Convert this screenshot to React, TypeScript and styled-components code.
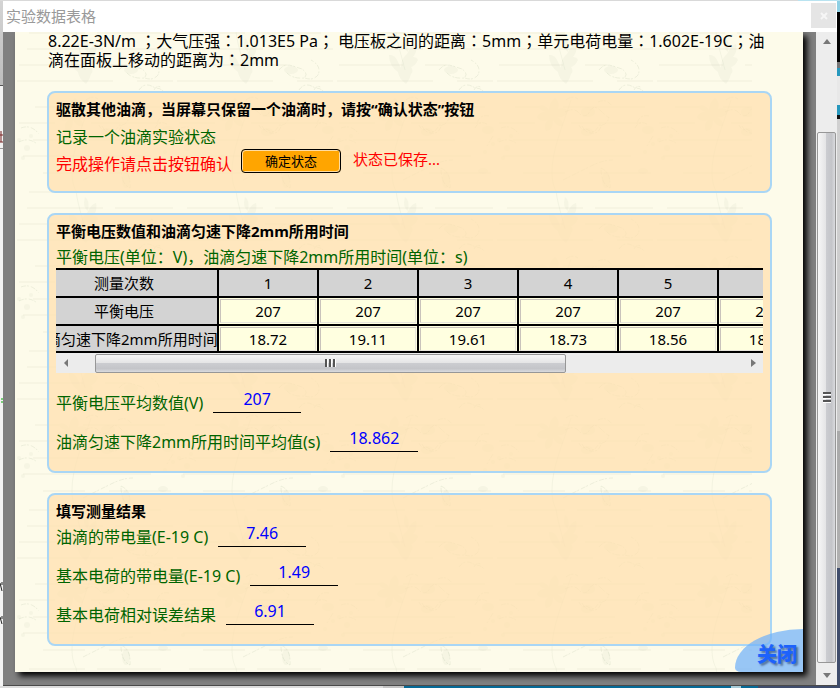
import React from "react";
import styled, { createGlobalStyle } from "styled-components";

const GlobalStyle = createGlobalStyle`
  *, *::before, *::after { box-sizing: border-box; }
  body {
    margin: 0;
    font-family: "Noto Sans", "Noto Sans CJK SC", sans-serif;
    font-size: 16px;
    color: #000;
  }
  button, input { font-family: inherit; }
`;

const Desktop = styled.div`
  display: grid;
  grid-template-columns: 3px minmax(0, 1fr) 3px;
  grid-template-rows: 1px 1fr 3px;
  min-height: 100vh;
  background: #d9d9d9;
`;

const TopEdge = styled.div`
  grid-column: 1 / -1;
  background: linear-gradient(90deg, #d9d9d9 95%, #b9e3f0 95%);
`;

const LeftEdge = styled.div`
  overflow: hidden;
  background: linear-gradient(#d4d4d4, #bdbdbd 84px, #555 84px, #555 85px, #f3f3f3 85px, #f3f3f3 147px, #999 147px, #999 148px, #f3f3f3 148px);
`;

const RightEdge = styled.div`
  overflow: hidden;
  background: linear-gradient(
    #8fd0e4 11px, #000 11px, #000 61px, #777 61px, #777 67px, #2798bd 67px, #2798bd 75px,
    #e8e8e8 75px, #e8e8e8 104px, #2798bd 104px, #2798bd 114px, #111 114px, #111 118px,
    #d0d0d0 118px, #cacaca 430px, #a9a9a9 430px, #b0b0b0 567px, #3f4c6b 567px
  );
`;

const BottomEdge = styled.div`
  grid-column: 1 / -1;
  background: linear-gradient(90deg, #dcdcdc 383px, #c4c4c4 383px, #c4c4c4 404px, #076a96 404px, #076a96 731px, #a8ccd8 731px, #a8ccd8 741px, #076a96 741px, #076a96 758px, #3f4c6b 758px);
`;

const Window = styled.main`
  display: flex;
  flex-direction: column;
  min-width: 0;
  border-bottom: 1px solid #4a4a4a;
`;

const TitleBar = styled.header`
  display: flex;
  align-items: center;
  justify-content: space-between;
  height: 31px;
  padding: 0 1px 2px 3px;
  background: #fff;
`;

const WindowTitle = styled.h1`
  margin: 0;
  font-size: 15px;
  font-weight: 400;
  color: #999;
`;

const CloseWindow = styled.button`
  display: flex;
  align-items: center;
  justify-content: center;
  width: 25px;
  height: 25px;
  padding: 0;
  border: 0;
  background: #e5e5e5;
`;

const Body = styled.div`
  display: flex;
  flex: 1;
`;

const Viewport = styled.div`
  display: flex;
  flex: 1;
  min-width: 0;
  overflow: hidden;
  padding: 0 13px 13px 12px;
  background: #808080;
`;

const Paper = styled.div`
  position: relative;
  isolation: isolate;
  flex: 1;
  min-width: 0;
  padding: 0 31px 26px 32px;
  background: #fdfbea;
  box-shadow: 4px 4px 6px #000;
`;

const PatternLayer = styled.svg`
  position: absolute;
  z-index: -1;
  top: 0;
  left: 0;
  width: calc(100% - 51px);
  height: 100%;
`;

const Intro = styled.p`
  margin: 0 0 21px;
  padding: 0 6px 0 1px;
  font-family: "Noto Sans", "Noto Sans CJK TC", sans-serif;
  font-size: 16px;
  line-height: 19px;
`;

const Sections = styled.div`
  display: flex;
  flex-direction: column;
  gap: 20px;
`;

const Panel = styled.section`
  padding: 3px 7px 15px;
  border: 2px solid #a9d6f5;
  border-radius: 8px;
  background: rgba(255, 224, 175, 0.75);
`;

const PanelTitle = styled.h2`
  margin: 0;
  font-size: 15px;
  font-weight: 700;
  line-height: 26px;
`;

const Line = styled.div<{ $tone: "green" | "red"; $tight?: boolean }>`
  display: flex;
  align-items: center;
  gap: 9px;
  height: ${(p) => (p.$tight ? 24 : 27)}px;
  color: ${(p) => (p.$tone === "green" ? "#006400" : "#f00")};
`;

const ConfirmButton = styled.button`
  width: 100px;
  height: 24px;
  margin-bottom: 3px;
  padding: 0;
  border: 1px solid #000;
  border-radius: 4px;
  background: #ffa500;
  box-shadow: inset 1px 1px 0 #ffdca0, inset -1px -1px 0 #ffdca0;
  font-size: 13px;
  line-height: 20px;
  color: #000;
`;

const Status = styled.span`
  margin: 0 0 8px 3px;
  font-size: 15px;
`;

const TableClip = styled.div`
  overflow: hidden;
`;

const DataTable = styled.table`
  width: 790px;
  margin-left: -27px;
  border-collapse: collapse;
  table-layout: fixed;
  font-size: 15px;

  th, td {
    height: 28px;
    padding: 0;
    border: 2px solid #000;
    text-align: center;
    font-weight: 400;
    line-height: 24px;
    white-space: nowrap;
  }
  th { background: #d3d3d3; }
  td { background: #ffffe0; }
  tr:last-child > * { height: 27px; }
`;

const HeadCol = styled.col`
  width: 188px;
`;

const CellInput = styled.input`
  display: block;
  width: calc(100% - 2px);
  height: 24px;
  margin: 0 auto;
  padding: 0;
  border: 1px solid;
  border-color: #c9c3bb #e8e6dc #e8e6dc #c9c3bb;
  background: #ffffe0;
  font-size: 15px;
  text-align: center;
  color: #000;
`;

const HScroll = styled.div`
  display: flex;
  align-items: center;
  height: 20px;
  background: #ececec;
`;

const ScrollArrow = styled.button`
  display: flex;
  align-items: center;
  justify-content: center;
  flex: none;
  width: 20px;
  height: 20px;
  padding: 0;
  border: 0;
  background: transparent;
`;

const HTrack = styled.div`
  flex: 1;
  padding: 0 25% 0 19px;
`;

const HThumb = styled.div`
  display: flex;
  align-items: center;
  justify-content: center;
  height: 19px;
  border: 1px solid #979797;
  border-radius: 2px;
  background: linear-gradient(#f6f6f6, #e4e4e5 48%, #cbccd0 50%, #c4c5c9 80%, #dadbde);
`;

const VScroll = styled.div`
  display: flex;
  flex-direction: column;
  align-items: center;
  flex: none;
  width: 21px;
  background: #ededed;
`;

const VTrack = styled.div`
  display: flex;
  flex-direction: column;
  flex: 1;
  width: 19px;
  padding: 80px 0 2px;
`;

const VThumb = styled.div`
  display: flex;
  flex: 1;
  align-items: center;
  justify-content: center;
  border: 1px solid #979797;
  border-radius: 2px;
  background: linear-gradient(90deg, #f6f6f6, #e4e4e5 48%, #cbccd0 50%, #c4c5c9 80%, #dadbde);
`;

const Fields = styled.div<{ $spaced?: boolean }>`
  display: flex;
  flex-direction: column;
  gap: 12px;
  padding-top: ${(p) => (p.$spaced ? 17 : 0)}px;
`;

const Field = styled.label`
  display: flex;
  align-items: flex-start;
  gap: 10px;
  height: 27px;
  line-height: 27px;
  color: #006400;
`;

const ValueInput = styled.input`
  width: 88px;
  height: 23px;
  padding: 0 0 4px;
  border: 0;
  border-bottom: 1px solid #000;
  background: transparent;
  font-size: 16px;
  text-align: center;
  color: #00f;
`;

const CloseCorner = styled.button`
  position: absolute;
  right: 0;
  bottom: 0;
  display: flex;
  justify-content: flex-end;
  align-items: center;
  width: 68px;
  height: 43px;
  padding: 6px 6px 0 0;
  border: 0;
  border-radius: 100% 0 0 6px / 90% 0 0 4px;
  background: rgba(112, 178, 250, 0.72);
  font-size: 20px;
  font-weight: 900;
  color: #1d62fb;
  text-shadow: 2px 2px 2px rgba(40, 60, 100, 0.6);
`;

const trials = [
  { voltage: "207", time: "18.72" },
  { voltage: "207", time: "19.11" },
  { voltage: "207", time: "19.61" },
  { voltage: "207", time: "18.73" },
  { voltage: "207", time: "18.56" },
  { voltage: "207", time: "18.44" },
];

const arrows = {
  up: "M5 2 L9 7 H1 Z",
  down: "M1 3 H9 L5 8 Z",
  left: "M3 5 L7 1 V9 Z",
  right: "M3 1 L8 5 L3 9 Z",
};

function Arrow({ dir, label }: { dir: keyof typeof arrows; label: string }) {
  return (
    <ScrollArrow type="button" aria-label={label}>
      <svg width="10" height="10" viewBox="0 0 10 10">
        <path d={arrows[dir]} fill="#777" />
      </svg>
    </ScrollArrow>
  );
}

function BotanicalPattern() {
  return (
    <PatternLayer aria-hidden="true">
      <defs>
        <pattern id="botanical" width="160" height="159" patternUnits="userSpaceOnUse">
          <g fill="none" stroke="#8a9a72" strokeOpacity="0.08" strokeWidth="1.5">
            <path d="M14 1H70M82 1H146M12 17H88M100 17H158M4 33H68M90 33H112M2 49H98M122 49H158M20 75H44M68 75H150M4 91H40M76 91H146M18 108H120M8 124H136M28 141H70M94 141H156" />
          </g>
          <g fill="none" stroke="#7f9a6d" strokeOpacity="0.12" strokeDasharray="5 1 2 2">
            <path d="M76 68C67 96 57 118 57 140C57 150 59 155 61 159M61 0C63 14 66 22 70 38" strokeOpacity="0.08" strokeDasharray="none" />
            <path d="M104 38q5-7 14-4l9 3q7 5 2 9q-12 1-18-6M130 46q8 3 13-3q4-9-7-15M124 58q6-9 16-2q6 0 9 4M139 58q3-6 8-2" />
            <path d="M71 68q6-5 12-1M70 80q9-5 14 1t10 0q4-10 12-2t8 6q-2 9-10 8q-5 11-12 4q-5 3-8-4M87 94q5 10 16 6l4-7M103 70q8-4 14 4" />
            <path d="M152 92q-8-4-12 4M154 84q-10-2-12 8M158 104l-6 10M6 96q10-4 18 6M4 110q10-5 18 2" />
            <path d="M68 148l28-14q12-6 22-6M106 136q10 4 9 20q-9-4-9-20" />
          </g>
          <g fill="#7f9a6d" fillOpacity="0.06">
            <path d="M54 23q6-1 9 7l3 6q0-10 6-14q5-10 9-10q2 7-3 13q4 0 5 3q-3 6-7 7q3 4 0 7q-2 7-5 10q-7-5-8-12q-9-6-9-17" />
            <path d="M70 6q5 3 3 14q-6-4-3-14" />
            <path d="M44 74q6-2 10 4q1-9 6-12q5 4 3 11q7-2 10 2q-3 7-11 6q7 4 6 9q-6 1-10-6q0 11-7 11q-3-6 2-11q-9 2-11-3q2-5 9-5q-7-2-7-6" />
            <ellipse cx="116" cy="38" rx="7" ry="4" />
            <ellipse cx="93" cy="80" rx="7" ry="5" />
            <ellipse cx="92" cy="100" rx="6" ry="4" />
            <ellipse cx="153" cy="98" rx="6" ry="4" />
            <circle cx="158" cy="112" r="2" />
            <circle cx="4" cy="108" r="2" />
            <circle cx="12" cy="116" r="3" />
            <circle cx="150" cy="120" r="2" />
            <circle cx="16" cy="104" r="2" />
            <circle cx="8" cy="126" r="2" />
            <ellipse cx="111" cy="148" rx="4" ry="8" />
            <ellipse cx="148" cy="139" rx="5" ry="3" />
          </g>
        </pattern>
      </defs>
      <rect width="100%" height="100%" fill="url(#botanical)" />
    </PatternLayer>
  );
}

function ResultField({ label, value }: { label: string; value: string }) {
  return (
    <Field>
      <span>{label}</span>
      <ValueInput defaultValue={value} />
    </Field>
  );
}

export default function App() {
  return (
    <>
      <GlobalStyle />
      <Desktop>
        <TopEdge />
        <LeftEdge>
          <svg width="3" height="640" aria-hidden="true">
            <path d="M1 130V141M0 134H3M0 141H3" stroke="#722" fill="none" />
            <path d="M1 398H3M1 401H3" stroke="#0a0" />
            <path d="M0 582L2 590M2 581V584M0 616L2 623M2 615V618" stroke="#222" fill="none" />
          </svg>
        </LeftEdge>
        <Window>
          <TitleBar>
            <WindowTitle>实验数据表格</WindowTitle>
            <CloseWindow type="button" aria-label="关闭窗口">
              <svg width="8" height="8" viewBox="0 0 8 8">
                <path d="M1 1L7 7M7 1L1 7" stroke="#f6f6f6" strokeWidth="2" />
              </svg>
            </CloseWindow>
          </TitleBar>
          <Body>
            <Viewport>
              <Paper>
                <BotanicalPattern />
                <Intro>
                  8.22E-3N/m ；大气压强：1.013E5 Pa； 电压板之间的距离：5mm；单元电荷电量：1.602E-19C；油滴在面板上移动的距离为：2mm
                </Intro>
                <Sections>
                  <Panel>
                    <PanelTitle>驱散其他油滴，当屏幕只保留一个油滴时，请按“确认状态”按钮</PanelTitle>
                    <Line $tone="green">记录一个油滴实验状态</Line>
                    <Line $tone="red">
                      <span>完成操作请点击按钮确认</span>
                      <ConfirmButton type="button">确定状态</ConfirmButton>
                      <Status role="status">状态已保存...</Status>
                    </Line>
                  </Panel>
                  <Panel>
                    <PanelTitle>平衡电压数值和油滴匀速下降2mm所用时间</PanelTitle>
                    <Line $tone="green" $tight>
                      平衡电压(单位：V)，油滴匀速下降2mm所用时间(单位：s)
                    </Line>
                    <TableClip>
                      <DataTable>
                        <colgroup>
                          <HeadCol />
                          {trials.map((_, i) => (
                            <col key={i} />
                          ))}
                        </colgroup>
                        <tbody>
                          <tr>
                            <th scope="row">测量次数</th>
                            {trials.map((_, i) => (
                              <th key={i} scope="col">{i + 1}</th>
                            ))}
                          </tr>
                          <tr>
                            <th scope="row">平衡电压</th>
                            {trials.map((t, i) => (
                              <td key={i}>
                                <CellInput aria-label={`平衡电压 ${i + 1}`} defaultValue={t.voltage} />
                              </td>
                            ))}
                          </tr>
                          <tr>
                            <th scope="row">油滴匀速下降2mm所用时间</th>
                            {trials.map((t, i) => (
                              <td key={i}>
                                <CellInput aria-label={`所用时间 ${i + 1}`} defaultValue={t.time} />
                              </td>
                            ))}
                          </tr>
                        </tbody>
                      </DataTable>
                    </TableClip>
                    <HScroll>
                      <Arrow dir="left" label="向左滚动" />
                      <HTrack>
                        <HThumb>
                          <svg width="12" height="10" viewBox="0 0 12 10">
                            <path d="M1 1V9M5 1V9M9 1V9" stroke="#555" strokeWidth="2" />
                            <path d="M2.5 1V9M6.5 1V9M10.5 1V9" stroke="#fff" />
                          </svg>
                        </HThumb>
                      </HTrack>
                      <Arrow dir="right" label="向右滚动" />
                    </HScroll>
                    <Fields $spaced>
                      <ResultField label="平衡电压平均数值(V)" value="207" />
                      <ResultField label="油滴匀速下降2mm所用时间平均值(s)" value="18.862" />
                    </Fields>
                  </Panel>
                  <Panel>
                    <PanelTitle>填写测量结果</PanelTitle>
                    <Fields>
                      <ResultField label="油滴的带电量(E-19 C)" value="7.46" />
                      <ResultField label="基本电荷的带电量(E-19 C)" value="1.49" />
                      <ResultField label="基本电荷相对误差结果" value="6.91" />
                    </Fields>
                  </Panel>
                </Sections>
                <CloseCorner type="button">关闭</CloseCorner>
              </Paper>
            </Viewport>
            <VScroll>
              <Arrow dir="up" label="向上滚动" />
              <VTrack>
                <VThumb>
                  <svg width="10" height="12" viewBox="0 0 10 12">
                    <path d="M1 1H9M1 5H9M1 9H9" stroke="#555" strokeWidth="2" />
                    <path d="M1 2.5H9M1 6.5H9M1 10.5H9" stroke="#fff" />
                  </svg>
                </VThumb>
              </VTrack>
              <Arrow dir="down" label="向下滚动" />
            </VScroll>
          </Body>
        </Window>
        <RightEdge />
        <BottomEdge />
      </Desktop>
    </>
  );
}
